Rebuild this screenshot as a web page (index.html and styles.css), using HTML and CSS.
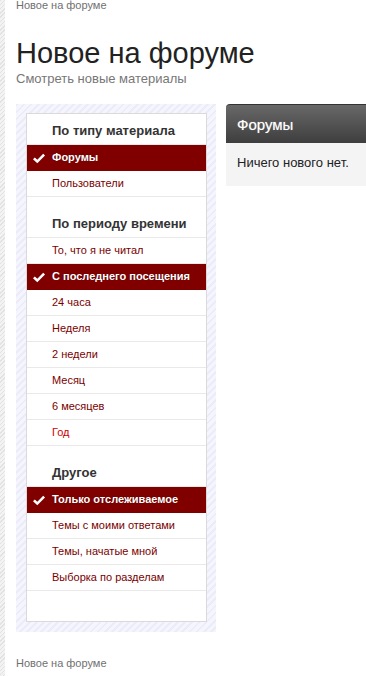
FILE: index.html
```html
<!DOCTYPE html>
<html>
    <head>
        <title>Новое на форуме</title>
        <meta charset="utf-8">
        <link rel="stylesheet" href="styles.css">
    </head>
    <body>
        <div class="page">
            <div class="crumbs top">Новое на форуме</div>
            <h1>Новое на форуме</h1>
            <div class="subtitle">Смотреть новые материалы</div>
            <div class="layout">
                <div class="sidebar">
                    <div class="menu">
                        <div class="group">
                            <h3>По типу материала</h3>
                            <ul>
                                <li class="active"><svg class="check" viewBox="0 0 14 11"><path d="M1 6.2 L2.8 4.4 L5.3 6.8 L11.2 0.8 L13 2.6 L5.3 10.3 Z"/></svg>Форумы</li>
                                <li>Пользователи</li>
                            </ul>
                        </div>
                        <div class="group">
                            <h3>По периоду времени</h3>
                            <ul>
                                <li>То, что я не читал</li>
                                <li class="active"><svg class="check" viewBox="0 0 14 11"><path d="M1 6.2 L2.8 4.4 L5.3 6.8 L11.2 0.8 L13 2.6 L5.3 10.3 Z"/></svg>С последнего посещения</li>
                                <li>24 часа</li>
                                <li>Неделя</li>
                                <li>2 недели</li>
                                <li>Месяц</li>
                                <li>6 месяцев</li>
                                <li class="hover">Год</li>
                            </ul>
                        </div>
                        <div class="group">
                            <h3>Другое</h3>
                            <ul>
                                <li class="active"><svg class="check" viewBox="0 0 14 11"><path d="M1 6.2 L2.8 4.4 L5.3 6.8 L11.2 0.8 L13 2.6 L5.3 10.3 Z"/></svg>Только отслеживаемое</li>
                                <li>Темы с моими ответами</li>
                                <li>Темы, начатые мной</li>
                                <li>Выборка по разделам</li>
                            </ul>
                        </div>
                    </div>
                </div>
                <div class="results">
                    <div class="results-head">Форумы</div>
                    <div class="results-body">Ничего нового нет.</div>
                </div>
            </div>
            <div class="crumbs bottom">Новое на форуме</div>
        </div>
    </body>
</html>
```

FILE: styles.css
```css
html
{
    overflow: hidden;
}
body
{
    margin: 0;
    font-family: "Liberation Sans", Arial, sans-serif;
    color: #222;
    background: repeating-linear-gradient(135deg, #e2e2e2 0, #e2e2e2 1px, #f3f3f3 1px, #f3f3f3 3px) left top / 5px 100% repeat-y, #fff;
    overflow: hidden;
}
.page
{
    padding-left: 16px;
    min-height: 676px;
}
.crumbs
{
    font-size: 11px;
    line-height: 14px;
    color: #707070;
}
.crumbs.top
{
    margin-top: -2px;
}
.crumbs.bottom
{
    margin-top: 24px;
}
h1
{
    margin: 24px 0 1px;
    font-size: 29px;
    line-height: 34px;
    font-weight: normal;
    color: #222;
}
.subtitle
{
    font-size: 13px;
    line-height: 16px;
    color: #777;
}
.layout
{
    display: flex;
    align-items: flex-start;
    gap: 10px;
    margin-top: 17px;
    width: 600px;
}
.sidebar
{
    flex: 0 0 200px;
    box-sizing: border-box;
    padding: 9px 9px 10px 10px;
    background: repeating-linear-gradient(135deg, #ebebf9 0, #ebebf9 2px, #f5f5fd 2px, #f5f5fd 5px);
}
.menu
{
    background: #fff;
    border: 1px solid #dadada;
    padding-bottom: 30px;
}
.group + .group
{
    margin-top: 10px;
}
.group h3
{
    margin: 0;
    padding: 9px 0 5px 25px;
    font-size: 13px;
    line-height: 16px;
    color: #333;
    white-space: nowrap;
}
.group ul
{
    list-style: none;
    margin: 0;
    padding: 0;
    border-top: 1px solid #e9e9e9;
}
.group li
{
    position: relative;
    height: 25px;
    line-height: 25px;
    padding-left: 25px;
    font-size: 11px;
    color: #7a0000;
    border-bottom: 1px solid #e9e9e9;
    white-space: nowrap;
}
.group li.hover
{
    color: #cc0000;
}
.group li.active
{
    background: #800000;
    color: #fff;
    font-weight: bold;
    text-shadow: 0 0 1px rgba(0, 0, 0, 0.4);
    border-bottom-color: #800000;
}
.check
{
    position: absolute;
    left: 5px;
    top: 8px;
    width: 14px;
    height: 11px;
    fill: #fff;
}
.results
{
    flex: 1;
}
.results-head
{
    height: 38px;
    line-height: 39px;
    padding-left: 11px;
    font-size: 15px;
    color: #fff;
    text-shadow: 0 0 1px rgba(255, 255, 255, 0.5);
    border-top: 1px solid #333;
    border-radius: 4px 0 0 0;
    background: linear-gradient(#686868, #3e3e3e);
}
.results-body
{
    height: 43px;
    line-height: 40px;
    padding-left: 11px;
    font-size: 13px;
    color: #222;
    background: #f4f4f4;
}
```
